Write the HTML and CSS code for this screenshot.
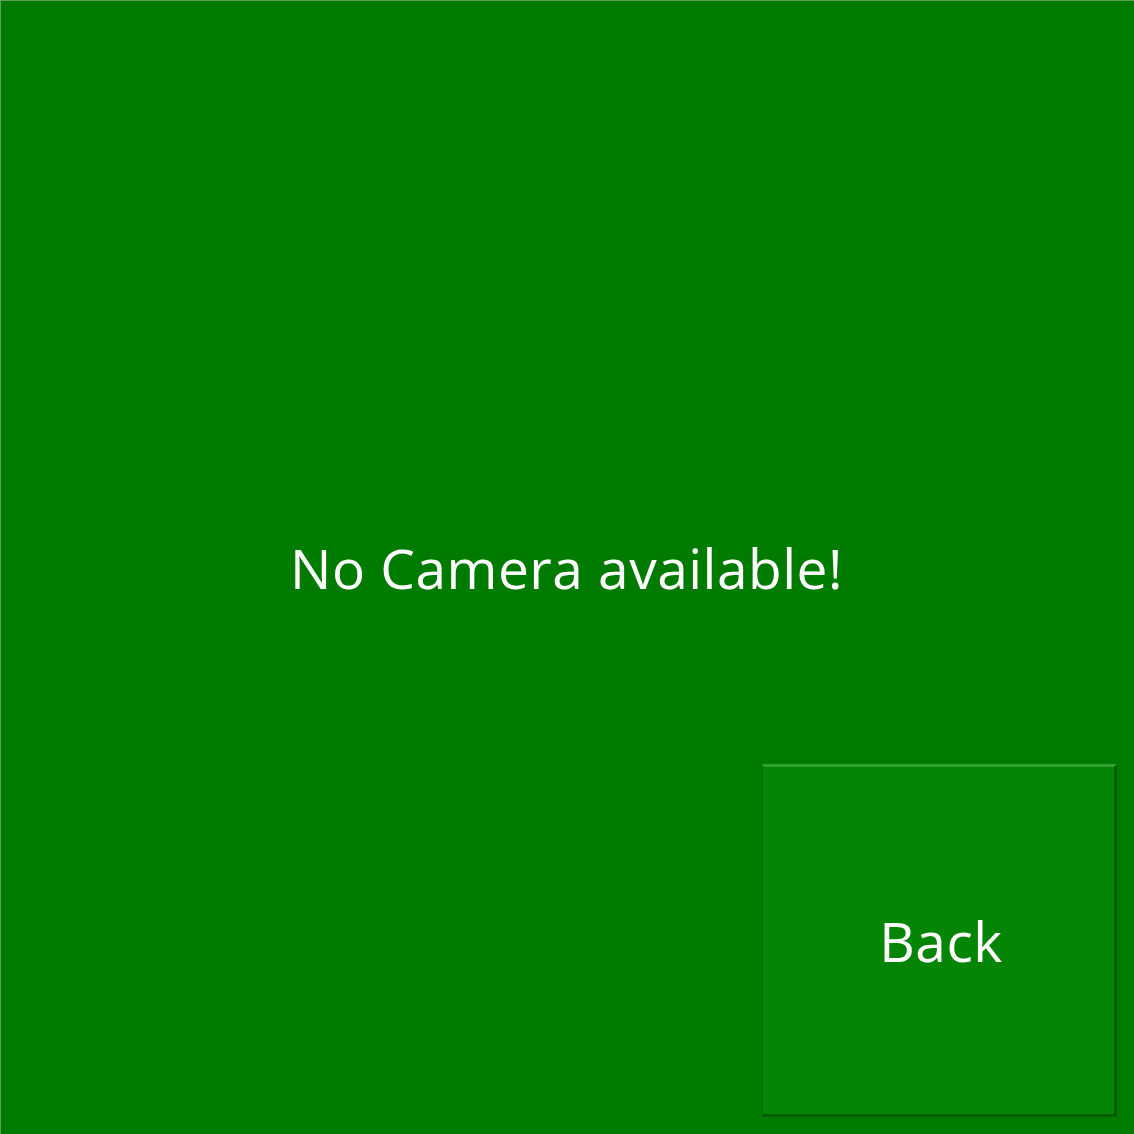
FILE: index.html
```html
<!DOCTYPE html>
<html lang="en">
<head>
<meta charset="utf-8">
<title>No Camera</title>
<link rel="stylesheet" href="styles.css">
</head>
<body>
<main class="screen">
  <p class="message">No Camera available!</p>
  <button class="back-btn" type="button">Back</button>
</main>
</body>
</html>
```

FILE: styles.css
```css
html, body {
  margin: 0;
  padding: 0;
  background: #007b00;
}
.screen {
  box-sizing: border-box;
  width: 1134px;
  height: 1134px;
  background: #007b00;
  border-top: 1px solid #5f9f5f;
  border-left: 1px solid #5f9f5f;
  display: grid;
  grid-template-columns: 1fr;
  grid-template-rows: 1fr;
  font-family: "Open Sans", "Liberation Sans", sans-serif;
  color: #ffffff;
}
.message {
  grid-area: 1 / 1;
  align-self: center;
  justify-self: center;
  margin: 0 0 0 -2px;
  font-size: 55px;
  line-height: 1;
  letter-spacing: 0.5px;
}
.back-btn {
  grid-area: 1 / 1;
  align-self: end;
  justify-self: end;
  box-sizing: border-box;
  width: 355px;
  height: 353px;
  margin: 0 17px 17px 0;
  padding: 0 0 0 5px;
  background: #058505;
  color: #ffffff;
  font-family: inherit;
  font-size: 55px;
  letter-spacing: 0.5px;
  border-style: solid;
  border-width: 3px 3px 3px 1px;
  border-color: #2fa02f #035a03 #045f04 #046a04;
  cursor: pointer;
}
```
